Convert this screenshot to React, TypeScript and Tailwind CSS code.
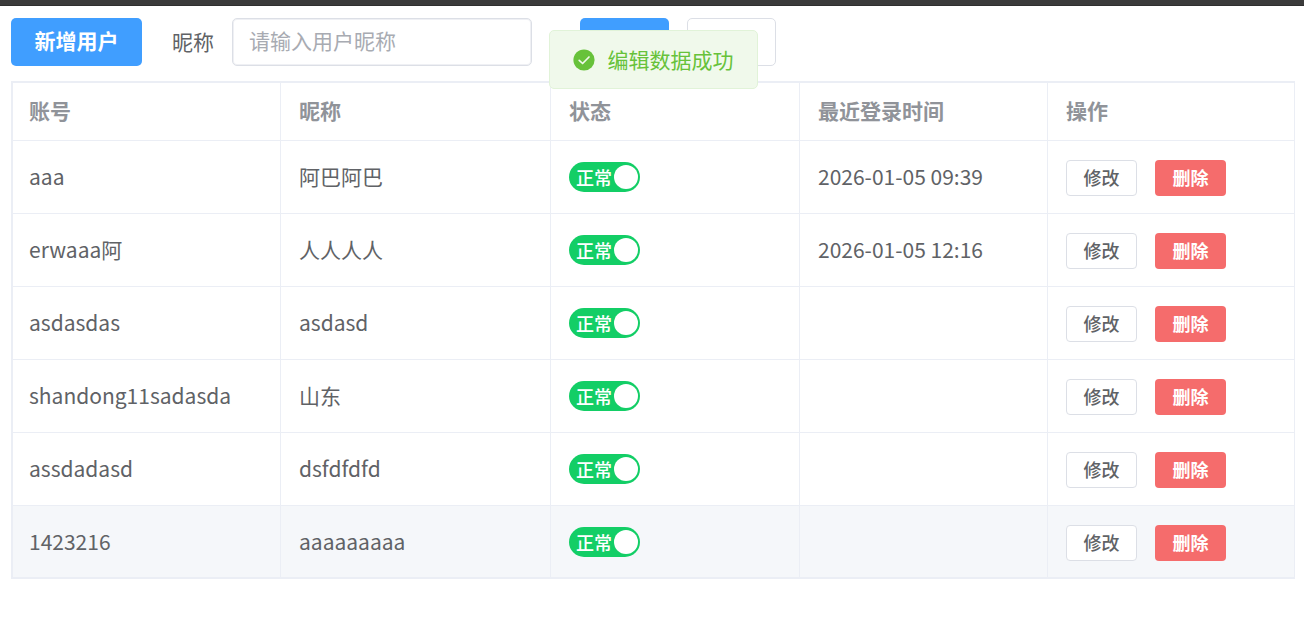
import { useState } from "react";
import clsx from "clsx";

type User = {
  account: string;
  nickname: string;
  lastLogin: string;
};

const users: User[] = [
  { account: "aaa", nickname: "阿巴阿巴", lastLogin: "2026-01-05 09:39" },
  { account: "erwaaa阿", nickname: "人人人人", lastLogin: "2026-01-05 12:16" },
  { account: "asdasdas", nickname: "asdasd", lastLogin: "" },
  { account: "shandong11sadasda", nickname: "山东", lastLogin: "" },
  { account: "assdadasd", nickname: "dsfdfdfd", lastLogin: "" },
  { account: "1423216", nickname: "aaaaaaaaa", lastLogin: "" },
];

const columns = [
  { title: "账号", width: "w-[268px]" },
  { title: "昵称", width: "w-[270px]" },
  { title: "状态", width: "w-[249px]" },
  { title: "最近登录时间", width: "w-[248px]" },
  { title: "操作", width: "w-[247px]" },
];

const cell = "border-r border-b border-[#ebeef5] px-[18px] first:pl-4";
const textCell = clsx(cell, "pb-0.5");

const StatusSwitch = ({ label }: { label: string }) => {
  const [checked, setChecked] = useState(true);
  return (
    <label
      className={clsx(
        "relative flex h-[30px] w-[71px] cursor-pointer items-center justify-between rounded-full pr-0.5 pl-[7px] text-[18px] leading-[30px] text-white",
        checked ? "bg-[#13ce66]" : "flex-row-reverse bg-[#ff4949]"
      )}
    >
      <input
        type="checkbox"
        role="switch"
        aria-label={label}
        checked={checked}
        onChange={(e) => setChecked(e.target.checked)}
        className="sr-only"
      />
      <span className="font-medium">{checked ? "正常" : "停用"}</span>
      <span className="size-6 shrink-0 rounded-full bg-white"></span>
    </label>
  );
};

const Message = ({ text }: { text: string }) => (
  <div className="pointer-events-none fixed top-[30px] right-[9px] left-[11px] z-10 flex justify-center">
    <div
      role="alert"
      className="flex h-[59px] items-center gap-[13px] rounded-[5px] border border-[#e1f3d8] bg-[#f0f9eb] px-[23px] whitespace-nowrap text-[#67c23a]"
    >
      <svg viewBox="0 0 22 22" className="size-[22px]" aria-hidden="true">
        <circle cx="11" cy="11" r="10.6" fill="#67c23a" />
        <path
          d="M6.2 11.3 9.6 14.5 16 8"
          fill="none"
          stroke="#f0f9eb"
          strokeWidth="1.7"
          strokeLinecap="round"
          strokeLinejoin="round"
        />
      </svg>
      <p className="pb-0.5">{text}</p>
    </div>
  </div>
);

const App = () => {
  const [nickname, setNickname] = useState("");

  return (
    <div className="font-['Noto_Sans_CJK_SC',sans-serif] text-[21px] leading-[30px] text-[#606266]">
      <header className="h-1.5 border-b border-[#2f2f2f] bg-[#3b3b3b]"></header>
      <Message text="编辑数据成功" />
      <main className="pt-3 pr-[9px] pl-[11px]">
        <form
          className="mb-[15px] flex items-center"
          onSubmit={(e) => e.preventDefault()}
        >
          <button
            type="button"
            className="h-12 w-[131px] rounded-[5px] bg-[#409eff] pb-1 font-bold text-white"
          >
            新增用户
          </button>
          <label htmlFor="nickname" className="ml-[30px] pr-[18px] pb-0.5">
            昵称
          </label>
          <input
            id="nickname"
            value={nickname}
            onChange={(e) => setNickname(e.target.value)}
            placeholder="请输入用户昵称"
            className="h-12 w-[300px] rounded-[5px] border border-[#dcdfe6] px-4 pb-1 inset-ring inset-ring-[#eff0f4] outline-none placeholder:text-[#a8abb2]"
          />
          <button
            type="submit"
            aria-label="查询"
            className="ml-12 h-12 w-[89px] rounded-[5px] bg-[#409eff]"
          ></button>
          <button
            type="reset"
            aria-label="重置"
            onClick={() => setNickname("")}
            className="ml-[18px] h-12 w-[89px] rounded-[5px] border border-[#dcdfe6] bg-white"
          ></button>
        </form>
        <div className="border-t-2 border-l-2 border-[#ebeef5]">
          <table className="w-full table-fixed border-separate border-spacing-0 text-left">
            <thead>
              <tr className="h-[58px] text-[#909399]">
                {columns.map((column) => (
                  <th
                    key={column.title}
                    className={clsx(cell, column.width, "pb-1 font-bold")}
                  >
                    {column.title}
                  </th>
                ))}
              </tr>
            </thead>
            <tbody>
              {users.map((user) => (
                <tr
                  key={user.account}
                  className="h-[73px] last:bg-[#f5f7fa] last:*:border-b-2"
                >
                  <td className={textCell}>{user.account}</td>
                  <td className={textCell}>{user.nickname}</td>
                  <td className={cell}>
                    <StatusSwitch label={user.account} />
                  </td>
                  <td className={textCell}>{user.lastLogin}</td>
                  <td className={cell}>
                    <div className="flex gap-[18px] pt-0.5 text-[18px]">
                      <button className="h-9 w-[71px] rounded-sm border border-[#dcdfe6] bg-white pb-0.5 font-medium">
                        修改
                      </button>
                      <button className="h-9 w-[71px] rounded-sm bg-[#f56c6c] pb-0.5 font-bold text-white">
                        删除
                      </button>
                    </div>
                  </td>
                </tr>
              ))}
            </tbody>
          </table>
        </div>
      </main>
    </div>
  );
};

export default App;
